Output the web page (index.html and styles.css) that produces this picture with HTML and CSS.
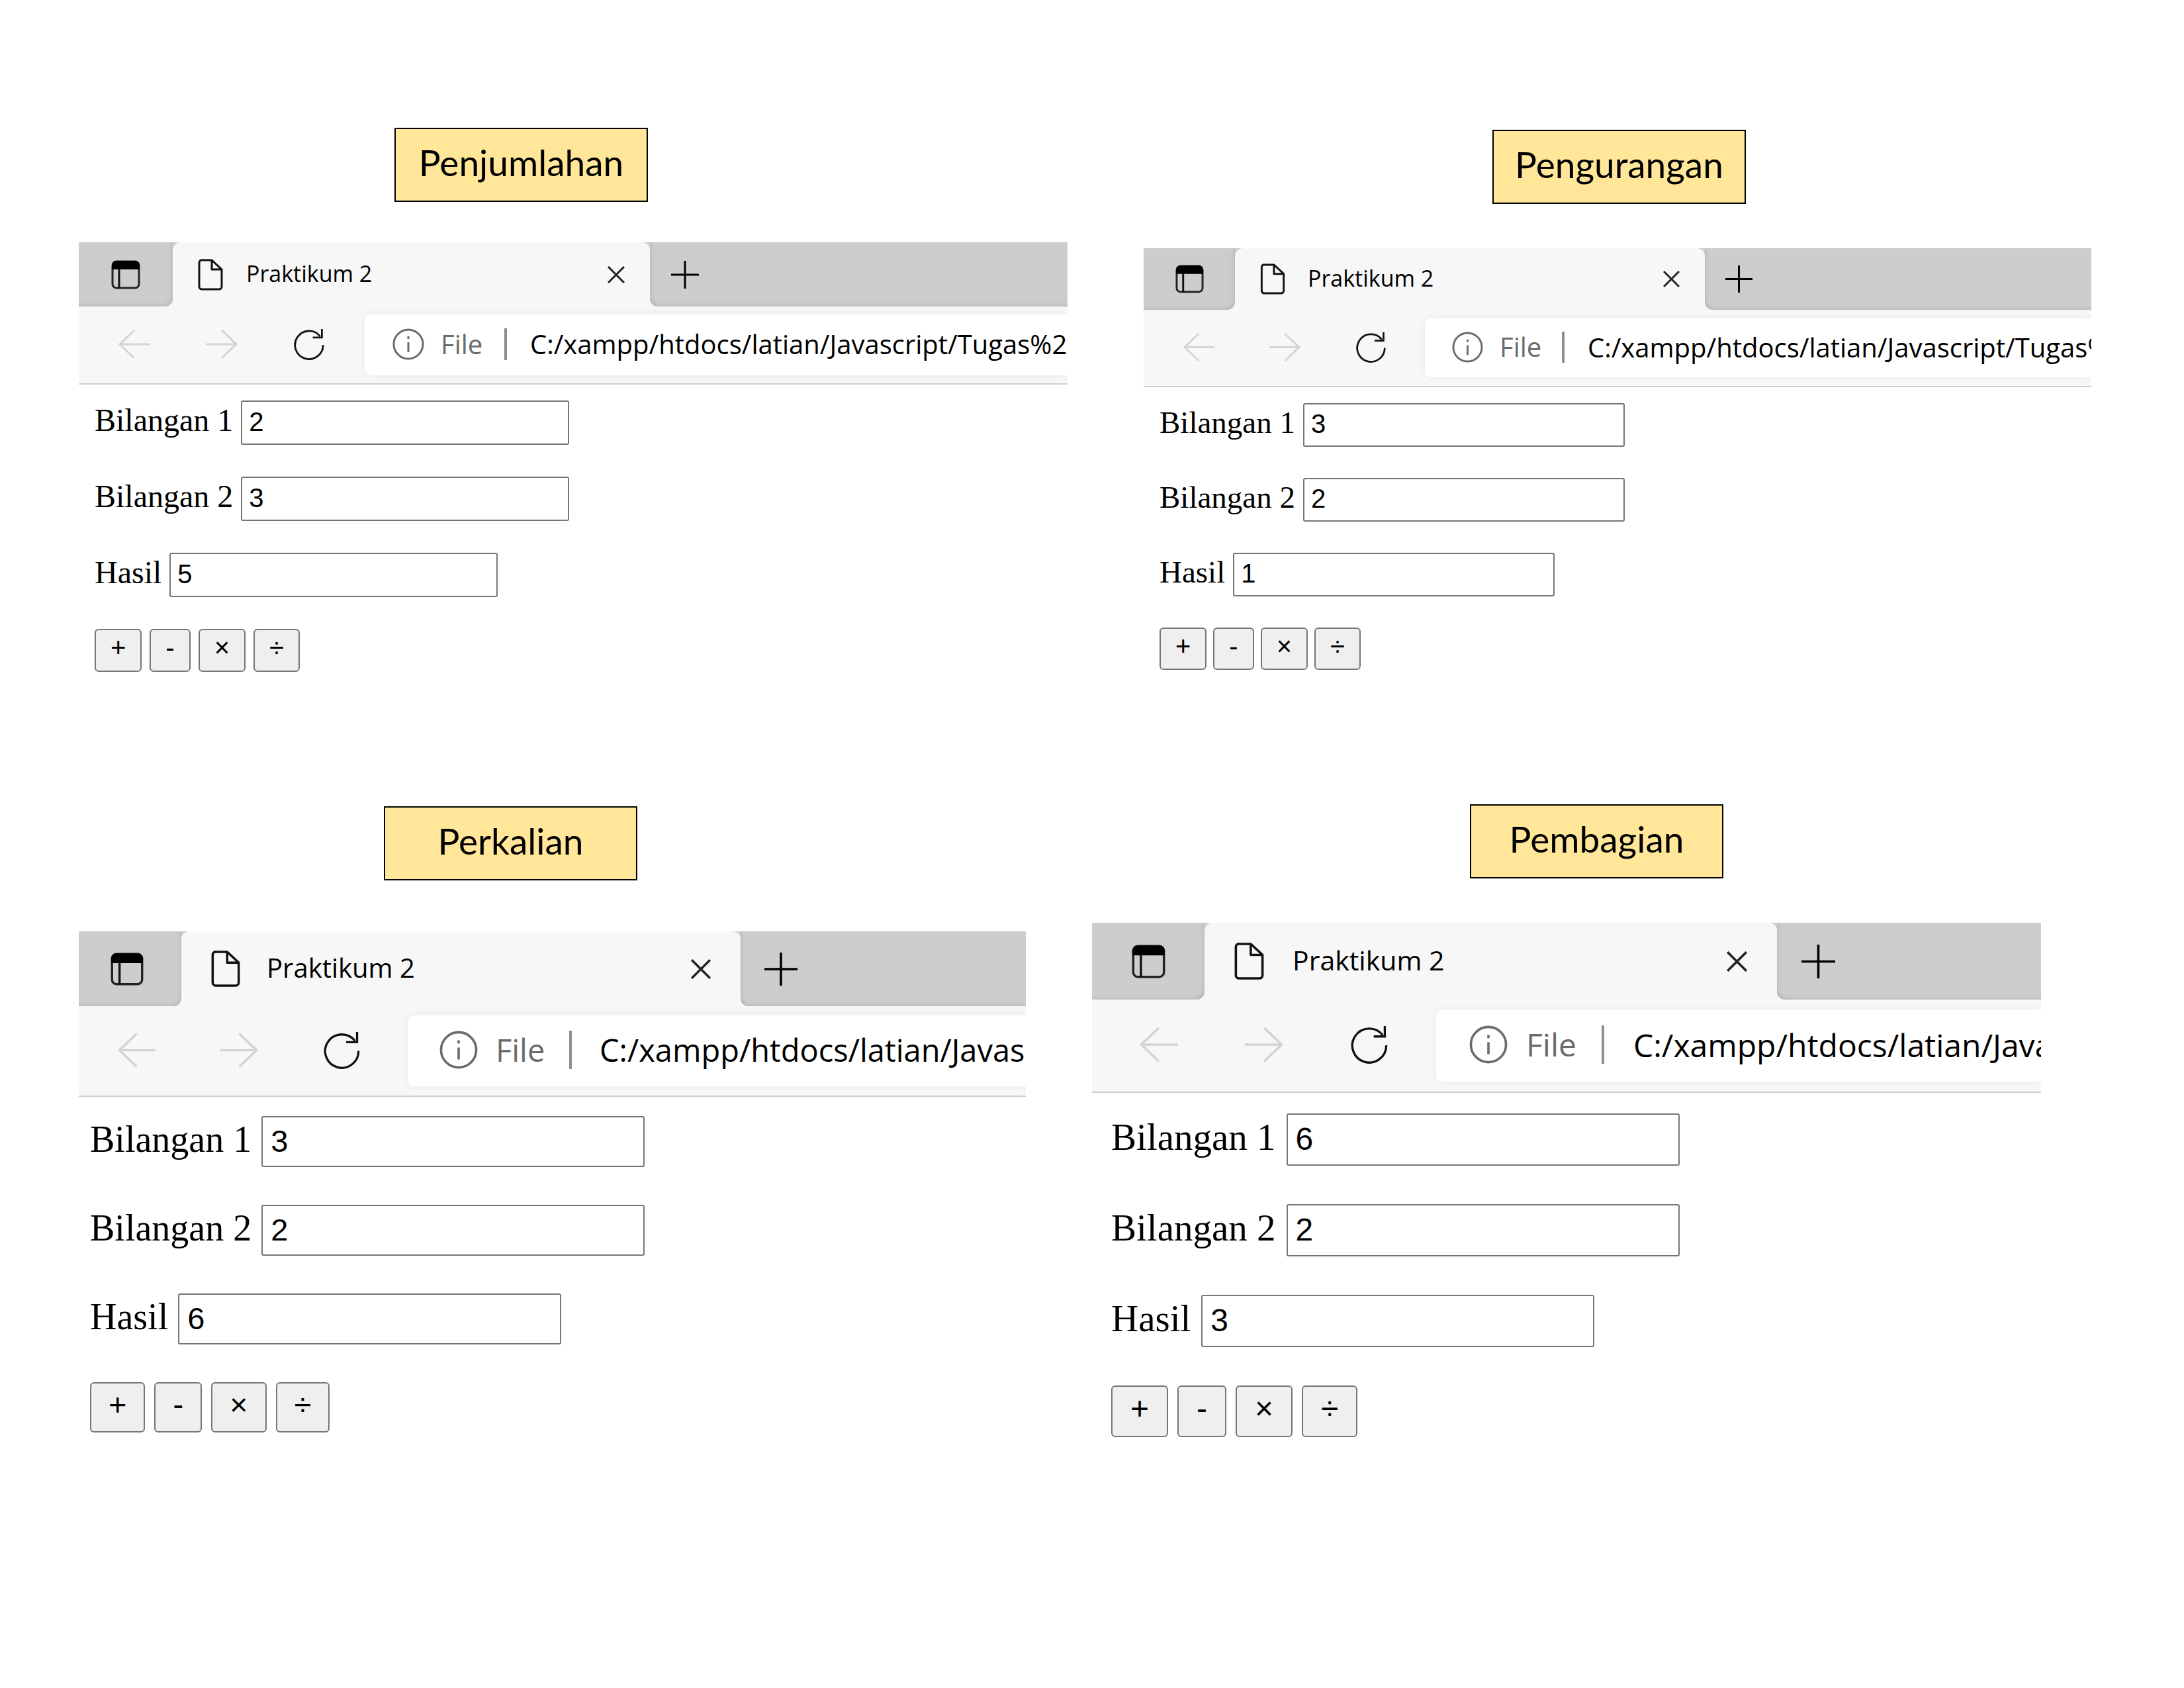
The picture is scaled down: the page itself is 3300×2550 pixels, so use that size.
FILE: index.html
```html
<!DOCTYPE html>
<html lang="id">
<head>
<meta charset="utf-8">
<title>Praktikum 2</title>
<link rel="stylesheet" href="styles.css">
</head>
<body>
<svg class="sprite" aria-hidden="true">
  <symbol id="i-tabs" viewBox="0 0 44 44"><rect x="2" y="2" width="40" height="40" rx="6" fill="none" stroke="#222" stroke-width="3"/><path d="M1 14V8a7 7 0 0 1 7-7h28a7 7 0 0 1 7 7v6z" fill="#000"/><path d="M12 13v29" stroke="#111" stroke-width="3"/></symbol>
  <symbol id="i-page" viewBox="0 0 38 48"><path d="M7 2h14l15 14v26a4 4 0 0 1-4 4H6a4 4 0 0 1-4-4V6a4 4 0 0 1 5-4zM21 2v14h15" fill="none" stroke="#111" stroke-width="3" stroke-linejoin="round"/></symbol>
  <symbol id="i-close" viewBox="0 0 26 26"><path d="M1 1l24 24M25 1L1 25" stroke="#222" stroke-width="3"/></symbol>
  <symbol id="i-plus" viewBox="0 0 42 42"><path d="M21 0v42M0 21h42" stroke="#000" stroke-width="3"/></symbol>
  <symbol id="i-back" viewBox="0 0 48 48"><path d="M24 3L2 24l22 21M2 24h46" fill="none" stroke="#d4d4d4" stroke-width="3"/></symbol>
  <symbol id="i-forward" viewBox="0 0 48 48"><path d="M24 3l22 21-22 21M46 24H0" fill="none" stroke="#d4d4d4" stroke-width="3"/></symbol>
  <symbol id="i-reload" viewBox="0 0 50 52"><path d="M48 27A23 23 0 1 1 43 13M46 1v14H31" fill="none" stroke="#111" stroke-width="3"/></symbol>
  <symbol id="i-info" viewBox="0 0 48 48"><circle cx="24" cy="24" r="22" fill="none" stroke="#6b6b6b" stroke-width="3"/><path d="M24 21v15M24 12v4" stroke="#6b6b6b" stroke-width="3"/></symbol>
</svg>
<main class="page">
  <div class="row row-top">
    <section class="panel add">
      <h2 class="caption">Penjumlahan</h2>
      <div class="window">
        <div class="strip">
          <div class="side"><button class="icon-button" aria-label="Tab"><svg class="icon-tabs"><use href="#i-tabs"/></svg></button></div>
          <div class="tab"><svg class="icon-page"><use href="#i-page"/></svg><span class="title">Praktikum 2</span><button class="icon-button" aria-label="Tutup"><svg class="icon-close"><use href="#i-close"/></svg></button></div>
          <div class="rest"><button class="icon-button" aria-label="Tab baru"><svg class="icon-plus"><use href="#i-plus"/></svg></button></div>
        </div>
        <div class="toolbar">
          <div class="nav"><button class="icon-button" aria-label="Kembali"><svg class="icon-nav"><use href="#i-back"/></svg></button><button class="icon-button" aria-label="Maju"><svg class="icon-nav"><use href="#i-forward"/></svg></button><button class="icon-button" aria-label="Muat ulang"><svg class="icon-nav"><use href="#i-reload"/></svg></button></div>
          <div class="address"><svg class="icon-info"><use href="#i-info"/></svg><label class="scheme" for="u1">File</label><span class="bar"></span><input class="url" id="u1" type="text" value="C:/xampp/htdocs/latian/Javascript/Tugas%2"></div>
        </div>
        <form class="form">
          <div class="field"><label for="a1">Bilangan 1</label><input class="box" id="a1" type="text" value="2"></div>
          <div class="field"><label for="b1">Bilangan 2</label><input class="box" id="b1" type="text" value="3"></div>
          <div class="field"><label for="c1">Hasil</label><input class="box" id="c1" type="text" value="5"></div>
          <div class="actions"><button class="op" type="button">+</button><button class="op" type="button">-</button><button class="op" type="button">×</button><button class="op" type="button">÷</button></div>
        </form>
      </div>
    </section>
    <section class="panel subtract">
      <h2 class="caption">Pengurangan</h2>
      <div class="window">
        <div class="strip">
          <div class="side"><button class="icon-button" aria-label="Tab"><svg class="icon-tabs"><use href="#i-tabs"/></svg></button></div>
          <div class="tab"><svg class="icon-page"><use href="#i-page"/></svg><span class="title">Praktikum 2</span><button class="icon-button" aria-label="Tutup"><svg class="icon-close"><use href="#i-close"/></svg></button></div>
          <div class="rest"><button class="icon-button" aria-label="Tab baru"><svg class="icon-plus"><use href="#i-plus"/></svg></button></div>
        </div>
        <div class="toolbar">
          <div class="nav"><button class="icon-button" aria-label="Kembali"><svg class="icon-nav"><use href="#i-back"/></svg></button><button class="icon-button" aria-label="Maju"><svg class="icon-nav"><use href="#i-forward"/></svg></button><button class="icon-button" aria-label="Muat ulang"><svg class="icon-nav"><use href="#i-reload"/></svg></button></div>
          <div class="address"><svg class="icon-info"><use href="#i-info"/></svg><label class="scheme" for="u2">File</label><span class="bar"></span><input class="url" id="u2" type="text" value="C:/xampp/htdocs/latian/Javascript/Tugas%2"></div>
        </div>
        <form class="form">
          <div class="field"><label for="a2">Bilangan 1</label><input class="box" id="a2" type="text" value="3"></div>
          <div class="field"><label for="b2">Bilangan 2</label><input class="box" id="b2" type="text" value="2"></div>
          <div class="field"><label for="c2">Hasil</label><input class="box" id="c2" type="text" value="1"></div>
          <div class="actions"><button class="op" type="button">+</button><button class="op" type="button">-</button><button class="op" type="button">×</button><button class="op" type="button">÷</button></div>
        </form>
      </div>
    </section>
  </div>
  <div class="row row-bottom">
    <section class="panel multiply">
      <h2 class="caption">Perkalian</h2>
      <div class="window">
        <div class="strip">
          <div class="side"><button class="icon-button" aria-label="Tab"><svg class="icon-tabs"><use href="#i-tabs"/></svg></button></div>
          <div class="tab"><svg class="icon-page"><use href="#i-page"/></svg><span class="title">Praktikum 2</span><button class="icon-button" aria-label="Tutup"><svg class="icon-close"><use href="#i-close"/></svg></button></div>
          <div class="rest"><button class="icon-button" aria-label="Tab baru"><svg class="icon-plus"><use href="#i-plus"/></svg></button></div>
        </div>
        <div class="toolbar">
          <div class="nav"><button class="icon-button" aria-label="Kembali"><svg class="icon-nav"><use href="#i-back"/></svg></button><button class="icon-button" aria-label="Maju"><svg class="icon-nav"><use href="#i-forward"/></svg></button><button class="icon-button" aria-label="Muat ulang"><svg class="icon-nav"><use href="#i-reload"/></svg></button></div>
          <div class="address"><svg class="icon-info"><use href="#i-info"/></svg><label class="scheme" for="u3">File</label><span class="bar"></span><input class="url" id="u3" type="text" value="C:/xampp/htdocs/latian/Javascript/Tugas%2"></div>
        </div>
        <form class="form">
          <div class="field"><label for="a3">Bilangan 1</label><input class="box" id="a3" type="text" value="3"></div>
          <div class="field"><label for="b3">Bilangan 2</label><input class="box" id="b3" type="text" value="2"></div>
          <div class="field"><label for="c3">Hasil</label><input class="box" id="c3" type="text" value="6"></div>
          <div class="actions"><button class="op" type="button">+</button><button class="op" type="button">-</button><button class="op" type="button">×</button><button class="op" type="button">÷</button></div>
        </form>
      </div>
    </section>
    <section class="panel divide">
      <h2 class="caption">Pembagian</h2>
      <div class="window">
        <div class="strip">
          <div class="side"><button class="icon-button" aria-label="Tab"><svg class="icon-tabs"><use href="#i-tabs"/></svg></button></div>
          <div class="tab"><svg class="icon-page"><use href="#i-page"/></svg><span class="title">Praktikum 2</span><button class="icon-button" aria-label="Tutup"><svg class="icon-close"><use href="#i-close"/></svg></button></div>
          <div class="rest"><button class="icon-button" aria-label="Tab baru"><svg class="icon-plus"><use href="#i-plus"/></svg></button></div>
        </div>
        <div class="toolbar">
          <div class="nav"><button class="icon-button" aria-label="Kembali"><svg class="icon-nav"><use href="#i-back"/></svg></button><button class="icon-button" aria-label="Maju"><svg class="icon-nav"><use href="#i-forward"/></svg></button><button class="icon-button" aria-label="Muat ulang"><svg class="icon-nav"><use href="#i-reload"/></svg></button></div>
          <div class="address"><svg class="icon-info"><use href="#i-info"/></svg><label class="scheme" for="u4">File</label><span class="bar"></span><input class="url" id="u4" type="text" value="C:/xampp/htdocs/latian/Javascript/Tugas%2"></div>
        </div>
        <form class="form">
          <div class="field"><label for="a4">Bilangan 1</label><input class="box" id="a4" type="text" value="6"></div>
          <div class="field"><label for="b4">Bilangan 2</label><input class="box" id="b4" type="text" value="2"></div>
          <div class="field"><label for="c4">Hasil</label><input class="box" id="c4" type="text" value="3"></div>
          <div class="actions"><button class="op" type="button">+</button><button class="op" type="button">-</button><button class="op" type="button">×</button><button class="op" type="button">÷</button></div>
        </form>
      </div>
    </section>
  </div>
</main>
</body>
</html>
```
FILE: styles.css
```css
* { box-sizing: border-box; }
body { margin: 0; background: #fff; color: #000; }
.sprite { display: none; }
svg { display: block; flex: none; }

.page { display: flex; flex-direction: column; gap: 200px; min-height: 100vh; padding-top: 193px; }
.row { display: grid; align-items: start; }
.row-top { grid-template-columns: 1494fr 1432fr; gap: 115px; padding: 0 140px 0 119px; }
.row-bottom { grid-template-columns: 1431fr 1434fr; gap: 100px; padding: 0 216px 0 119px; }

/* Each panel shows the same window at its own zoom */
.add {
  --indent: 477px; --space: 61px;
  --strip: 97px; --side: 142px; --side-pad: 0px; --tab: 721px; --tab-pad: 38px; --title-gap: 35px; --title: 34px; --plus-gap: 32px;
  --tabs-icon: 44px; --page-w: 38px; --page-h: 48px; --close: 26px; --plus: 42px;
  --nav-pad: 60px; --nav: 48px; --nav-gap: 84px; --address-gap: 60px; --edge: 12px; --address: 92px;
  --address-pad: 42px; --info: 48px; --info-gap: 25px; --bar-gap: 35px; --url: 40px; --scheme: 68px;
  --form-top: 24px; --form-left: 24px; --label: 48px; --value: 40px; --box-w: 496px; --box-h: 67px; --box-pad: 10px; --row-gap: 48px; --word: 12px;
  --op-h: 65px; --op-pad: 22px; --op-gap: 12px;
}
.subtract {
  --indent: 527px; --space: 67px;
  --strip: 93px; --side: 138px; --side-pad: 0px; --tab: 710px; --tab-pad: 38px; --title-gap: 34px; --title: 34px; --plus-gap: 31px;
  --tabs-icon: 43px; --page-w: 38px; --page-h: 47px; --close: 25px; --plus: 41px;
  --nav-pad: 60px; --nav: 47px; --nav-gap: 83px; --address-gap: 58px; --edge: 13px; --address: 89px;
  --address-pad: 41px; --info: 47px; --info-gap: 25px; --bar-gap: 35px; --url: 40px; --scheme: 66px;
  --form-top: 24px; --form-left: 24px; --label: 47px; --value: 40px; --box-w: 486px; --box-h: 66px; --box-pad: 10px; --row-gap: 47px; --word: 12px;
  --op-h: 64px; --op-pad: 22px; --op-gap: 10px;
  padding-top: 3px;
}
.multiply {
  --indent: 461px; --space: 77px;
  --strip: 113px; --side: 155px; --side-pad: 10px; --tab: 845px; --tab-pad: 45px; --title-gap: 40px; --title: 40px; --plus-gap: 36px;
  --tabs-icon: 50px; --page-w: 44px; --page-h: 57px; --close: 30px; --plus: 50px;
  --nav-pad: 59px; --nav: 57px; --nav-gap: 98px; --address-gap: 71px; --edge: 14px; --address: 107px;
  --address-pad: 48px; --info: 58px; --info-gap: 27px; --bar-gap: 42px; --url: 47px; --scheme: 83px;
  --form-top: 29px; --form-left: 17px; --label: 56px; --value: 47px; --box-w: 579px; --box-h: 77px; --box-pad: 12px; --row-gap: 57px; --word: 15px;
  --op-h: 76px; --op-pad: 26px; --op-gap: 14px;
  padding-top: 3px;
}
.divide {
  --indent: 571px; --space: 67px;
  --strip: 116px; --side: 170px; --side-pad: 0px; --tab: 865px; --tab-pad: 45px; --title-gap: 43px; --title: 41px; --plus-gap: 37px;
  --tabs-icon: 51px; --page-w: 45px; --page-h: 58px; --close: 31px; --plus: 51px;
  --nav-pad: 72px; --nav: 58px; --nav-gap: 101px; --address-gap: 72px; --edge: 15px; --address: 109px;
  --address-pad: 50px; --info: 58px; --info-gap: 28px; --bar-gap: 44px; --url: 48px; --scheme: 86px;
  --form-top: 31px; --form-left: 29px; --label: 57px; --value: 48px; --box-w: 594px; --box-h: 79px; --box-pad: 12px; --row-gap: 58px; --word: 16px;
  --op-h: 78px; --op-pad: 27px; --op-gap: 14px;
}

.panel { min-width: 0; }
.caption {
  width: 383px; height: 112px; margin: 0 0 var(--space) var(--indent);
  border: 2px solid #000; background: #ffe699;
  font: 400 55px/100px Lato, sans-serif; text-align: center;
}
.window { overflow: hidden; }
.icon-button { display: block; flex: none; margin: 0; padding: 0; border: 0; background: none; }

.strip { display: flex; height: var(--strip); background: linear-gradient(#cdcdcd 50%, #f7f7f7 50%); font-family: "Open Sans", sans-serif; }
.side, .rest { display: flex; align-items: center; background: #cdcdcd; }
.side { flex: none; width: var(--side); padding-right: var(--side-pad); justify-content: center; border-radius: 0 0 12px 0; box-shadow: inset -4px -4px 6px -3px #b4b4b4; }
.rest { flex: 1; padding-left: var(--plus-gap); border-radius: 0 0 0 12px; box-shadow: inset 4px -4px 6px -3px #b4b4b4; }
.tab { display: flex; flex: none; align-items: center; width: var(--tab); padding: 0 var(--tab-pad); border-radius: 12px 12px 0 0; background: #f7f7f7; }
.title { flex: 1; margin-left: var(--title-gap); padding-bottom: 3px; font-size: var(--title); line-height: 1; }
.icon-tabs { width: var(--tabs-icon); height: var(--tabs-icon); }
.icon-page { width: var(--page-w); height: var(--page-h); }
.icon-close { width: var(--close); height: var(--close); }
.icon-plus { width: var(--plus); height: var(--plus); }

.toolbar { display: flex; align-items: center; gap: var(--address-gap); padding: var(--edge) 0 var(--edge) var(--nav-pad); border-bottom: 2px solid #cdcdcd; background: #f7f7f7; }
.nav { display: flex; flex: none; gap: var(--nav-gap); padding-bottom: 3px; }
.icon-nav { width: var(--nav); height: var(--nav); }
.address {
  display: flex; flex: 1; align-items: center; min-width: 0; height: var(--address); padding: 0 0 3px var(--address-pad);
  border-radius: 10px 0 0 10px; background: #fff; box-shadow: 0 0 14px rgba(0, 0, 0, .06);
  font-family: "Open Sans", sans-serif; font-size: var(--url); line-height: 1;
}
.icon-info { width: var(--info); height: var(--info); }
.scheme { flex: none; width: var(--scheme); margin-left: var(--info-gap); color: #6b6b6b; }
.bar { flex: none; width: 4px; height: var(--info); margin: 0 var(--bar-gap) 0 28px; background: #8e8e8e; }
.url { flex: 1; min-width: 0; height: 100%; margin: 0; padding: 0; border: 0; background: none; color: #000; font: inherit; }

.form { display: flex; flex-direction: column; gap: var(--row-gap); padding: var(--form-top) 0 0 var(--form-left); }
.field { display: flex; align-items: baseline; gap: var(--word); height: var(--box-h); font: var(--label)/1 "Liberation Serif", serif; }
.box { width: var(--box-w); height: var(--box-h); margin: 0; padding: 0 var(--box-pad) 3px; border: 2px solid #767676; border-radius: 3px; background: #fff; color: #000; font: var(--value)/1 "Liberation Sans", sans-serif; }
.actions { display: flex; gap: var(--op-gap); }
.op { height: var(--op-h); margin: 0; padding: 0 var(--op-pad) 9px; border: 2px solid #767676; border-radius: 6px; background: #efefef; color: #000; font: var(--value)/1 "Liberation Sans", sans-serif; }
```
